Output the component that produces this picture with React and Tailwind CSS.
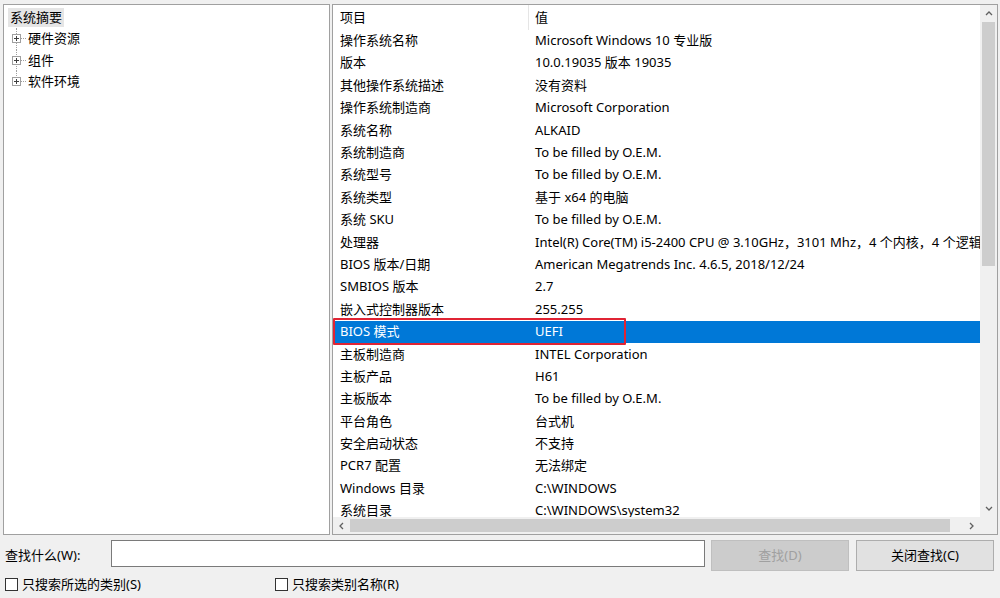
import React from 'react';

const rows = [
  ['操作系统名称', 'Microsoft Windows 10 专业版'],
  ['版本', '10.0.19035 版本 19035'],
  ['其他操作系统描述', '没有资料'],
  ['操作系统制造商', 'Microsoft Corporation'],
  ['系统名称', 'ALKAID'],
  ['系统制造商', 'To be filled by O.E.M.'],
  ['系统型号', 'To be filled by O.E.M.'],
  ['系统类型', '基于 x64 的电脑'],
  ['系统 SKU', 'To be filled by O.E.M.'],
  ['处理器', 'Intel(R) Core(TM) i5-2400 CPU @ 3.10GHz，3101 Mhz，4 个内核，4 个逻辑处理器'],
  ['BIOS 版本/日期', 'American Megatrends Inc. 4.6.5, 2018/12/24'],
  ['SMBIOS 版本', '2.7'],
  ['嵌入式控制器版本', '255.255'],
  ['BIOS 模式', 'UEFI'],
  ['主板制造商', 'INTEL Corporation'],
  ['主板产品', 'H61'],
  ['主板版本', 'To be filled by O.E.M.'],
  ['平台角色', '台式机'],
  ['安全启动状态', '不支持'],
  ['PCR7 配置', '无法绑定'],
  ['Windows 目录', 'C:\\WINDOWS'],
  ['系统目录', 'C:\\WINDOWS\\system32'],
];

const font = { fontFamily: '"Noto Sans", "Noto Sans CJK SC", sans-serif' };

// small expander box used by the tree
const PlusBox = () => (
  <svg width="9" height="9" viewBox="0 0 9 9" className="shrink-0">
    <rect x="0.5" y="0.5" width="8" height="8" fill="#fff" stroke="#a0a0a0" />
    <path d="M2 4.5h5M4.5 2v5" stroke="#404040" strokeWidth="1" />
  </svg>
);

const TreeItem = ({ label, last }) => (
  <div className="relative flex items-center h-[21.5px] pl-[4px]">
    {/* vertical dotted line */}
    <div className={`absolute left-[8px] top-0 border-l border-dotted border-[#a0a0a0] ${last ? 'h-[11px]' : 'h-full'}`} />
    <div className="relative z-10"><PlusBox /></div>
    <div className="w-[5px] border-t border-dotted border-[#a0a0a0] mr-[2px]" />
    <span>{label}</span>
  </div>
);

const Chevron = ({ dir }) => {
  const d = {
    up: 'M1 5l3-3 3 3',
    down: 'M1 2l3 3 3-3',
    left: 'M5 1L2 4l3 3',
    right: 'M2 1l3 3-3 3',
  }[dir];
  return (
    <svg width="8" height="8" viewBox="0 0 8 8">
      <path d={d} fill="none" stroke="#606060" strokeWidth="1.3" />
    </svg>
  );
};

export default function App() {
  return (
    <div className="w-[1000px] h-[598px] bg-[#f0f0f0] text-[13px] text-black overflow-hidden flex flex-col" style={font}>
      {/* panes */}
      <div className="flex pl-[3px] pt-[4px] h-[536px]">
        {/* tree */}
        <div className="w-[327px] h-[531px] bg-white border border-[#a0a0a0] pt-[3px] pl-[4px] leading-none">
          <div className="flex items-center h-[19px]">
            <span className="bg-[#e5e5e5] px-[2px] h-[19px] flex items-center">系统摘要</span>
          </div>
          <div className="mt-[1px]">
            <TreeItem label="硬件资源" />
            <TreeItem label="组件" />
            <TreeItem label="软件环境" last />
          </div>
        </div>

        {/* list view */}
        <div className="ml-[2px] w-[666px] h-[531px] bg-white border border-[#a0a0a0] flex flex-col overflow-hidden">
          <div className="flex flex-1 min-h-0">
            <div className="flex-1 min-w-0 overflow-hidden pl-[1px]">
              <div className="flex h-[24.6px] items-center">
                <div className="w-[194px] pl-[6px] shrink-0">项目</div>
                <div className="h-full border-l border-[#e5e5e5]" />
                <div className="pl-[6px]">值</div>
              </div>
              {rows.map(([k, v]) => {
                const sel = k === 'BIOS 模式';
                return (
                  <div
                    key={k}
                    className={`relative flex h-[22.4px] items-center whitespace-nowrap ${sel ? 'bg-[#0078d7] text-white' : ''}`}
                  >
                    <div className="w-[194px] pl-[6px] shrink-0">{k}</div>
                    <div className="pl-[7px]">{v}</div>
                    {sel && (
                      <div className="absolute left-[-1px] top-[-3px] w-[293px] h-[27px] border-2 border-[#e02434] rounded-[1px]" />
                    )}
                  </div>
                );
              })}
            </div>
            {/* vertical scrollbar */}
            <div className="w-[17px] shrink-0 bg-[#f0f0f0] flex flex-col">
              <div className="h-[17px] flex items-center justify-center"><Chevron dir="up" /></div>
              <div className="h-[244px] mx-[2px] bg-[#cdcdcd]" />
              <div className="flex-1" />
              <div className="h-[17px] flex items-center justify-center"><Chevron dir="down" /></div>
            </div>
          </div>
          {/* horizontal scrollbar */}
          <div className="h-[17px] flex shrink-0">
            <div className="flex-1 bg-[#f0f0f0] flex items-center">
              <div className="w-[17px] flex justify-center"><Chevron dir="left" /></div>
              <div className="w-[600px] h-[13px] bg-[#cdcdcd]" />
              <div className="flex-1" />
              <div className="w-[17px] flex justify-center"><Chevron dir="right" /></div>
            </div>
            <div className="w-[17px] bg-[#f0f0f0]" />
          </div>
        </div>
      </div>

      {/* search row */}
      <div className="flex items-center pl-[5px] mt-[4px] h-[31px]">
        <span className="w-[106px]">查找什么(W):</span>
        <div className="w-[594px] h-[27px] bg-white border border-[#7a7a7a] self-start" />
        <button className="ml-[6px] w-[138px] h-[31px] bg-[#cccccc] border border-[#bfbfbf] text-[#a0a0a0]">查找(D)</button>
        <button className="ml-[7px] w-[138px] h-[31px] bg-[#e1e1e1] border border-[#adadad]">关闭查找(C)</button>
      </div>

      {/* checkboxes */}
      <div className="flex items-center pl-[5px] mt-[4px]">
        <label className="flex items-center w-[270px]">
          <span className="w-[13px] h-[13px] border border-[#333] bg-white mr-[4px]" />
          只搜索所选的类别(S)
        </label>
        <label className="flex items-center">
          <span className="w-[13px] h-[13px] border border-[#333] bg-white mr-[4px]" />
          只搜索类别名称(R)
        </label>
      </div>
    </div>
  );
}
